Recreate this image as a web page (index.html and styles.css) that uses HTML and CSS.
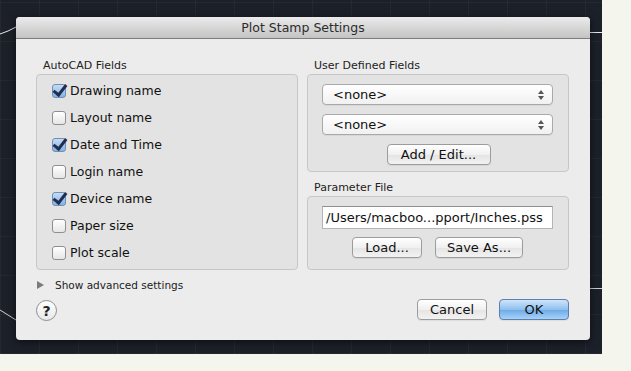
FILE: index.html
```html
<!DOCTYPE html>
<html lang="en">
<head>
    <meta charset="UTF-8">
    <title>Plot Stamp Settings</title>
    <link rel="stylesheet" href="styles.css">
</head>
<body>
    <div class="desktop">
        <svg class="sketch" width="602" height="354" viewBox="0 0 602 354">
            <path d="M0 34 L8 31 L16 27" fill="none" stroke="#e8e8e8" stroke-width="1"/>
            <path d="M0 310 L8 315 L16 320" fill="none" stroke="#cfcfcf" stroke-width="1"/>
            <line x1="590" y1="32.5" x2="602" y2="32.5" stroke="#e8e8e8"/>
            <line x1="590" y1="288.5" x2="602" y2="288.5" stroke="#cfcfcf"/>
        </svg>

        <div class="dialog">
            <div class="titlebar">Plot Stamp Settings</div>

            <div class="content">
                <div class="columns">
                    <div class="column">
                        <div class="group-label">AutoCAD Fields</div>
                        <div class="group fields">
                            <label class="check"><span class="box checked"></span>Drawing name</label>
                            <label class="check"><span class="box"></span>Layout name</label>
                            <label class="check"><span class="box checked"></span>Date and Time</label>
                            <label class="check"><span class="box"></span>Login name</label>
                            <label class="check"><span class="box checked"></span>Device name</label>
                            <label class="check"><span class="box"></span>Paper size</label>
                            <label class="check"><span class="box"></span>Plot scale</label>
                        </div>
                    </div>

                    <div class="column">
                        <div class="group-label">User Defined Fields</div>
                        <div class="group user">
                            <div class="select">&lt;none&gt;<span class="arrows"></span></div>
                            <div class="select">&lt;none&gt;<span class="arrows"></span></div>
                            <div class="btn-row">
                                <button class="btn wide">Add / Edit...</button>
                            </div>
                        </div>

                        <div class="group-label second">Parameter File</div>
                        <div class="group param">
                            <div class="field">/Users/macboo...pport/Inches.pss</div>
                            <div class="btn-row pair">
                                <button class="btn load">Load...</button>
                                <button class="btn save">Save As...</button>
                            </div>
                        </div>
                    </div>
                </div>

                <div class="advanced"><span class="triangle"></span>Show advanced settings</div>

                <div class="footer">
                    <span class="help">?</span>
                    <div class="actions">
                        <button class="btn action">Cancel</button>
                        <button class="btn action default">OK</button>
                    </div>
                </div>
            </div>
        </div>
    </div>
</body>
</html>
```

FILE: styles.css
```css
* {
    margin: 0;
    padding: 0;
    box-sizing: border-box;
}

body {
    width: 631px;
    height: 371px;
    background: #f4f6ee;
    font-family: 'DejaVu Sans', 'Liberation Sans', sans-serif;
    color: #111;
    overflow: hidden;
}

.desktop {
    position: relative;
    width: 602px;
    height: 354px;
    background-color: #1c2029;
    background-image:
        repeating-linear-gradient(90deg, rgba(255,255,255,0.035) 0 1px, transparent 1px 39px),
        repeating-linear-gradient(0deg, rgba(255,255,255,0.035) 0 1px, transparent 1px 39px);
}

.sketch {
    position: absolute;
    left: 0;
    top: 0;
}

.dialog {
    position: absolute;
    left: 16px;
    top: 17px;
    width: 574px;
    height: 323px;
    background: #ececec;
    border-radius: 4px;
    box-shadow: 0 2px 8px rgba(0,0,0,0.6);
    overflow: hidden;
}

.titlebar {
    height: 22px;
    background: linear-gradient(#ebebeb, #d3d3d3 60%, #c4c4c4);
    border-bottom: 1px solid #7d7d7d;
    text-align: center;
    font-size: 12.5px;
    line-height: 22px;
    color: #2c2c2c;
}

.content {
    padding: 20px 21px 0 20px;
}

.columns {
    display: grid;
    grid-template-columns: 262px 262px;
    gap: 9px;
}

.group-label {
    font-size: 11px;
    line-height: 14px;
    color: #222;
    padding-left: 7px;
    margin-bottom: 1px;
}

.group-label.second {
    margin-top: 9px;
}

.group {
    background: #e3e3e3;
    border: 1px solid #c7c7c7;
    border-radius: 4px;
}

.fields {
    height: 196px;
    padding: 2px 0 0 15px;
}

.check {
    display: flex;
    align-items: center;
    height: 27px;
    font-size: 12.5px;
    color: #111;
}

.box {
    position: relative;
    width: 14px;
    height: 14px;
    margin-right: 4px;
    border: 1px solid #8f8f8f;
    border-radius: 3px;
    background: linear-gradient(#ffffff, #e6e6e6);
}

.box.checked {
    background: linear-gradient(#c6dcf3, #86b2e2);
    border-color: #6f8fb3;
}

.box.checked::after {
    content: "";
    position: absolute;
    left: 3px;
    top: -3px;
    width: 5px;
    height: 11px;
    border-right: 3px solid #1d2f52;
    border-bottom: 3px solid #1d2f52;
    transform: rotate(38deg);
}

.user {
    height: 98px;
    padding: 9px 15px 0 14px;
}

.select {
    position: relative;
    height: 21px;
    margin-bottom: 9px;
    padding-left: 10px;
    font-size: 13px;
    line-height: 20px;
    background: linear-gradient(#ffffff, #f1f1f1);
    border: 1px solid #a9a9a9;
    border-radius: 4px;
    box-shadow: 0 1px 0 rgba(0,0,0,0.05);
}

.arrows::before,
.arrows::after {
    content: "";
    position: absolute;
    right: 8px;
    border-left: 3px solid transparent;
    border-right: 3px solid transparent;
}

.arrows::before {
    top: 5px;
    border-bottom: 4px solid #555;
}

.arrows::after {
    top: 11px;
    border-top: 4px solid #555;
}

.btn-row {
    display: flex;
    justify-content: center;
}

.btn {
    height: 21px;
    font-family: inherit;
    font-size: 13px;
    color: #111;
    background: linear-gradient(#ffffff, #f0f0f0 50%, #e4e4e4 51%, #f2f2f2);
    border: 1px solid #9c9c9c;
    border-radius: 4px;
    box-shadow: 0 1px 0 rgba(0,0,0,0.06);
}

.btn.wide {
    width: 104px;
    margin-left: 2px;
}

.param {
    height: 74px;
    padding: 9px 15px 0 14px;
}

.field {
    height: 23px;
    margin-bottom: 8px;
    padding-left: 3px;
    background: #fff;
    border: 1px solid #b5b5b5;
    border-top-color: #8e8e8e;
    font-size: 13px;
    line-height: 21px;
    white-space: nowrap;
    overflow: hidden;
}

.pair {
    gap: 13px;
}

.btn.load {
    width: 70px;
}

.btn.save {
    width: 88px;
}

.advanced {
    display: flex;
    align-items: center;
    margin-top: 9px;
    height: 12px;
    font-size: 10.5px;
    color: #222;
}

.triangle {
    width: 0;
    height: 0;
    margin: 0 11px 0 1px;
    border-top: 4px solid transparent;
    border-bottom: 4px solid transparent;
    border-left: 7px solid #7a7a7a;
}

.footer {
    display: flex;
    justify-content: space-between;
    align-items: center;
    margin-top: 6px;
}

.help {
    display: flex;
    justify-content: center;
    align-items: center;
    width: 21px;
    height: 21px;
    margin-top: 3px;
    border: 1px solid #8e8e8e;
    border-radius: 50%;
    background: linear-gradient(#ffffff, #e8e8e8);
    font-size: 14px;
    font-weight: bold;
    color: #222;
}

.actions {
    display: flex;
    gap: 12px;
}

.btn.action {
    width: 70px;
    height: 21px;
}

.btn.default {
    background: linear-gradient(#cfe4fa, #8fc0ef 50%, #6aa9e8 51%, #a9d2f7);
    border-color: #5b7fae;
}
```
